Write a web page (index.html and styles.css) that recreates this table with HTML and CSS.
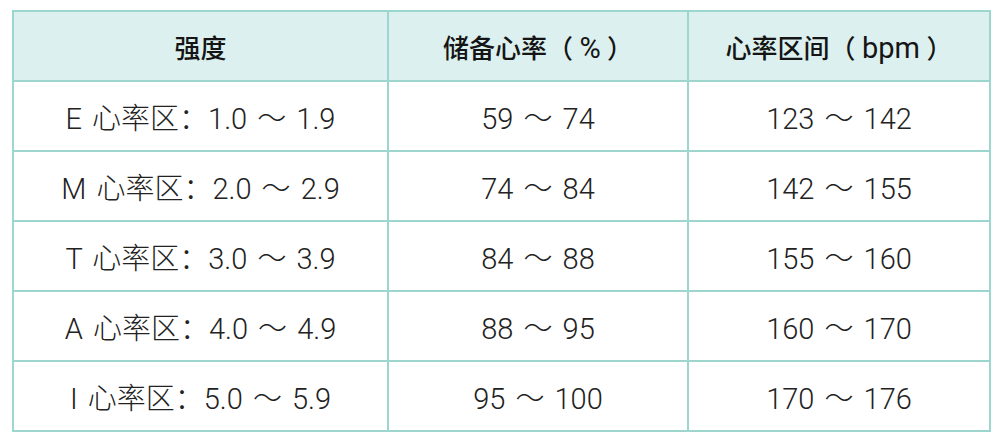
FILE: index.html
```html
<!DOCTYPE html>
<html lang="zh">
<head>
<meta charset="utf-8">
<link rel="stylesheet" href="styles.css">
</head>
<body>
<table class="zones">
  <colgroup>
    <col class="c1"><col class="c2"><col class="c3">
  </colgroup>
  <thead>
    <tr><th>强度</th><th>储备心率（ <span class="unit">%</span> ）</th><th>心率区间（ <span class="unit">bpm</span> ）</th></tr>
  </thead>
  <tbody>
    <tr><td>E 心率区：1.0 ～ 1.9</td><td>59 ～ 74</td><td>123 ～ 142</td></tr>
    <tr><td>M 心率区：2.0 ～ 2.9</td><td>74 ～ 84</td><td>142 ～ 155</td></tr>
    <tr><td>T 心率区：3.0 ～ 3.9</td><td>84 ～ 88</td><td>155 ～ 160</td></tr>
    <tr><td>A 心率区：4.0 ～ 4.9</td><td>88 ～ 95</td><td>160 ～ 170</td></tr>
    <tr><td>I 心率区：5.0 ～ 5.9</td><td>95 ～ 100</td><td>170 ～ 176</td></tr>
  </tbody>
</table>
</body>
</html>
```
FILE: styles.css
```css
html, body {
  margin: 0;
  padding: 0;
  background: #ffffff;
}
body {
  padding: 10px 0 0 12px;
  font-family: "Noto Sans CJK SC", "Noto Sans", sans-serif;
  color: #1a1a1a;
}
.zones {
  border-collapse: collapse;
  table-layout: fixed;
  width: 977px;
}
.c1 { width: 375px; }
.c2 { width: 300px; }
.c3 { width: 302px; }
.zones th, .zones td {
  border: 2px solid #9dd6cf;
  text-align: center;
  padding: 0;
}
.zones th {
  height: 68px;
  background: #dcf1ef;
  font-family: "Roboto", "Noto Sans CJK SC", sans-serif;
  font-size: 26px;
  font-weight: 500;
  color: #151515;
}
.unit {
  font-size: 29px;
  font-weight: 400;
}
.zones td {
  height: 68px;
  font-family: "Roboto", "Noto Sans CJK SC", sans-serif;
  font-size: 29px;
  font-weight: 300;
  color: #222222;
  word-spacing: 3px;
}
```
